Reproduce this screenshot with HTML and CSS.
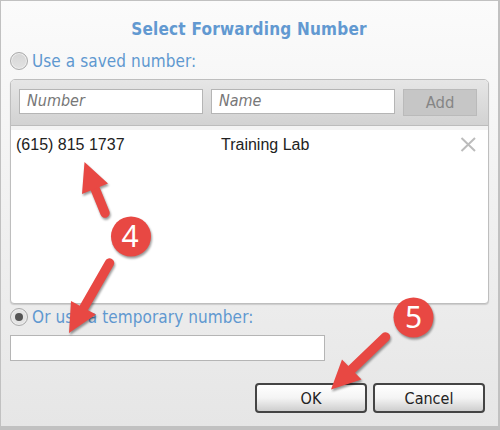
FILE: index.html
```
<!DOCTYPE html>
<html lang="en">
<head>
<meta charset="utf-8">
<title>Select Forwarding Number</title>
<link rel="stylesheet" href="styles.css">
</head>
<body>
<main class="dialog">
  <h1 class="title"><span>Select Forwarding Number</span></h1>
  <div class="choice saved"><span class="radio"></span><span class="label">Use a saved number:</span></div>
  <section class="panel">
    <div class="toolbar">
      <div class="field">Number</div>
      <div class="field">Name</div>
      <div class="add">Add</div>
    </div>
    <div class="row">
      <span class="phone">(615) 815 1737</span>
      <span class="name">Training Lab</span>
      <svg class="remove" width="16" height="16" viewBox="0 0 16 16"><path d="M1.5 1L15 14M15 1L1.5 14"/></svg>
    </div>
  </section>
  <div class="choice temp"><span class="radio on"></span><span class="label">Or use a temporary number:</span></div>
  <div class="entry"></div>
  <div class="actions">
    <div class="button ok">OK</div>
    <div class="button cancel">Cancel</div>
  </div>
  <svg class="callouts" width="500" height="430" viewBox="0 0 500 430">
    <g class="marks">
      <path class="shaft" d="M105 213L94 186M109.5 263L82 311M385.500 337L350 371"/>
      <path d="M84.500 162L108 183.500L82 194ZM69 333L71 301L96 314.500ZM331 389.500L342 359.500L361.500 379.500Z"/>
      <circle cx="131" cy="236.500" r="20"/>
      <circle cx="413.500" cy="317.500" r="20"/>
    </g>
    <text x="130" y="247">4</text>
    <text x="413.500" y="328.400">5</text>
  </svg>
</main>
</body>
</html>
```

FILE: styles.css
```
* { box-sizing: border-box; }
body { margin: 0; }
.dialog {
  position: relative;
  width: 500px;
  height: 430px;
  overflow: hidden;
  padding: 17px 0 0 9px;
  border: solid #c1c1c1;
  border-width: 1px 2px 4px 1px;
  background: linear-gradient(#fbfbfb, #e6e6e6);
  font-family: "DejaVu Sans Condensed", "DejaVu Sans", sans-serif;
  font-stretch: condensed;
}
.title {
  width: 478px;
  height: 24px;
  margin: 0;
  text-align: center;
  font-size: 17px;
  line-height: 22px;
  color: #6299d1;
  letter-spacing: 0.22px;
}
.choice { display: flex; align-items: center; gap: 4px; height: 24px; }
.saved { margin-top: 7px; }
.radio {
  display: flex;
  width: 18px;
  height: 18px;
  border: 1px solid #aaa;
  border-radius: 50%;
  background: linear-gradient(#d6d6d6, #e2e2e2);
  box-shadow: inset 0 0 0 1px #eee;
}
.on { background: #e4e4e4; }
.on::after { content: ""; width: 8px; height: 8px; margin: auto; border-radius: 50%; background: #555; }
.label {
  font-size: 17px;
  line-height: 22px;
  color: #5f98d0;
  letter-spacing: 0.09px;
  white-space: nowrap;
}
.panel {
  width: 479px;
  height: 225px;
  margin-top: 6px;
  border: 1px solid #bebebe;
  border-radius: 5px 5px 4px 4px;
  background: #fff;
  overflow: hidden;
  box-shadow: 0 1px 1px #ccc;
}
.toolbar {
  display: flex;
  gap: 8px;
  height: 46px;
  padding: 9px 0 0 8px;
  border-bottom: 1px solid #bcbcbc;
  background: linear-gradient(#e6e6e6, #d2d2d2);
}
.field {
  width: 184px;
  height: 25px;
  padding-left: 7px;
  border: 1px solid #b5b5b5;
  background: #fff;
  color: #777;
  font-size: 16px;
  font-style: italic;
  line-height: 22px;
}
.add {
  width: 74px;
  height: 27px;
  border: 1px solid #bababa;
  background: #c6c6c6;
  color: #858585;
  font-size: 16.5px;
  line-height: 25px;
  text-align: center;
}
.row {
  display: flex;
  height: 38px;
  padding-left: 5px;
  border-top: 4px solid #f3f3f3;
  color: #222;
  font: 16px/30px "Liberation Sans", sans-serif;
}
.phone { width: 205px; }
.name { width: 239px; }
.remove { margin-top: 7px; fill: none; stroke: #bcbcbc; stroke-width: 2; }
.temp { margin-top: 1px; }
.entry {
  width: 315px;
  height: 26px;
  margin-top: 6px;
  border: 1px solid #b5b5b5;
  background: #fff;
}
.actions { display: flex; gap: 6px; margin: 22px 0 0 245px; }
.button {
  width: 112px;
  height: 30px;
  border: 2px solid #444;
  border-radius: 4px;
  background: linear-gradient(#fff, #f4f4f4 50%, #cecece);
  color: #222;
  font-size: 16px;
  line-height: 27px;
  text-align: center;
}
.callouts { position: absolute; left: -1px; top: -1px; }
.marks { fill: #e84843; filter: drop-shadow(1px 2px 1px rgba(0, 0, 0, .4)); }
.shaft { fill: none; stroke: #e84843; stroke-width: 9.5; stroke-linecap: round; }
.callouts text { fill: #fff; font: 30px "Noto Sans", sans-serif; text-anchor: middle; }
```
